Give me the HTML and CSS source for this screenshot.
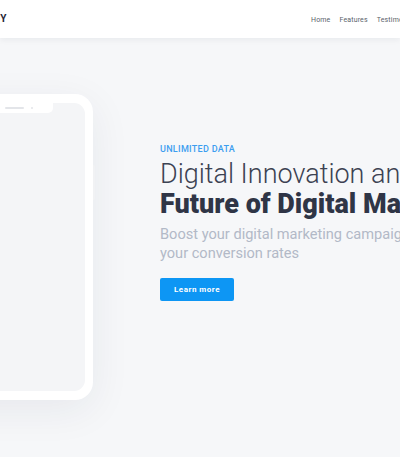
FILE: index.html
```html
<!DOCTYPE html>
<html lang="en">
<head>
<meta charset="utf-8">
<title>Agency</title>
<link rel="stylesheet" href="styles.css">
</head>
<body>
<header class="topbar">
  <div class="logo">AGENCY</div>
  <nav class="nav">
    <a href="#">Home</a>
    <a href="#">Features</a>
    <a href="#">Testimonials</a>
    <a href="#">Pricing</a>
  </nav>
</header>
<main class="hero">
  <div class="phone">
    <div class="screen">
      <div class="notch"><span class="speaker"></span><span class="camera"></span></div>
    </div>
  </div>
  <div class="copy">
    <div class="eyebrow">UNLIMITED DATA</div>
    <h1 class="title"><span class="light">Digital Innovation and the</span><br><strong>Future of Digital Marketing</strong></h1>
    <p class="lead">Boost your digital marketing campaigns and<br>your conversion rates</p>
    <a class="btn" href="#">Learn more</a>
  </div>
</main>
</body>
</html>
```
FILE: styles.css
```css
html, body {
  margin: 0;
  padding: 0;
  overflow: hidden;
}
body {
  background: #f6f7f9;
  font-family: Roboto, "Noto Sans", sans-serif;
  width: 400px;
  height: 457px;
}
.topbar {
  height: 38px;
  background: #fff;
  display: flex;
  align-items: center;
  box-shadow: 0 2px 6px rgba(20, 30, 50, 0.06);
  position: relative;
  z-index: 2;
  white-space: nowrap;
  overflow: hidden;
}
.logo {
  flex: none;
  width: 60px;
  margin-left: -53px;
  text-align: right;
  font-weight: 700;
  font-size: 10px;
  letter-spacing: 0.5px;
  color: #1f2433;
  padding-bottom: 2px;
}
.nav {
  flex: none;
  display: flex;
  gap: 9px;
  margin-left: 304px;
  padding-top: 1px;
}
.nav a {
  font-family: Roboto, sans-serif;
  font-size: 7px;
  color: #5a5f6a;
  text-decoration: none;
  letter-spacing: 0.15px;
}
.hero {
  display: flex;
  align-items: flex-start;
  padding-top: 56px;
  white-space: nowrap;
}
.phone {
  flex: none;
  width: 150px;
  height: 306px;
  margin-left: -57px;
  box-sizing: border-box;
  padding: 9px 8px 9px 8px;
  background: #fff;
  border-radius: 18px;
  box-shadow: 0 10px 40px rgba(30, 40, 70, 0.07);
  position: relative;
}
.phone::after {
  content: "";
  position: absolute;
  right: -2px;
  top: 71px;
  width: 2px;
  height: 35px;
  background: #f1f2f4;
  border-radius: 0 2px 2px 0;
}
.screen {
  height: 100%;
  background: #f4f5f7;
  border-radius: 11px;
  display: flex;
  justify-content: center;
  align-items: flex-start;
}
.notch {
  width: 68px;
  height: 10px;
  background: #fff;
  border-radius: 0 0 5px 5px;
  display: flex;
  align-items: center;
  justify-content: center;
  gap: 7px;
  padding-left: 2px;
}
.speaker {
  width: 19px;
  height: 1.5px;
  background: #e3e5e9;
  border-radius: 1px;
}
.camera {
  width: 2.5px;
  height: 2.5px;
  background: #e3e5e9;
  border-radius: 50%;
}
.copy {
  flex: none;
  margin-left: 67px;
  padding-top: 49px;
}
.eyebrow {
  font-size: 9px;
  line-height: 12px;
  color: #3d9ef0;
  letter-spacing: 0.3px;
  font-weight: 500;
}
.title {
  margin: 4px 0 0;
  font-size: 27px;
  line-height: 30px;
  color: #2f3546;
  font-weight: 700;
}
.title .light {
  font-weight: 300;
  color: #3c4252;
}
.lead {
  margin: 6px 0 0;
  font-size: 14.6px;
  line-height: 19px;
  color: #b2b9c7;
}
.btn {
  display: flex;
  align-items: center;
  justify-content: center;
  margin-top: 15px;
  width: 74px;
  height: 23px;
  background: #0d96f4;
  color: #fff;
  font-size: 8px;
  font-weight: 700;
  letter-spacing: 0.5px;
  text-decoration: none;
  border-radius: 2px;
}
```
